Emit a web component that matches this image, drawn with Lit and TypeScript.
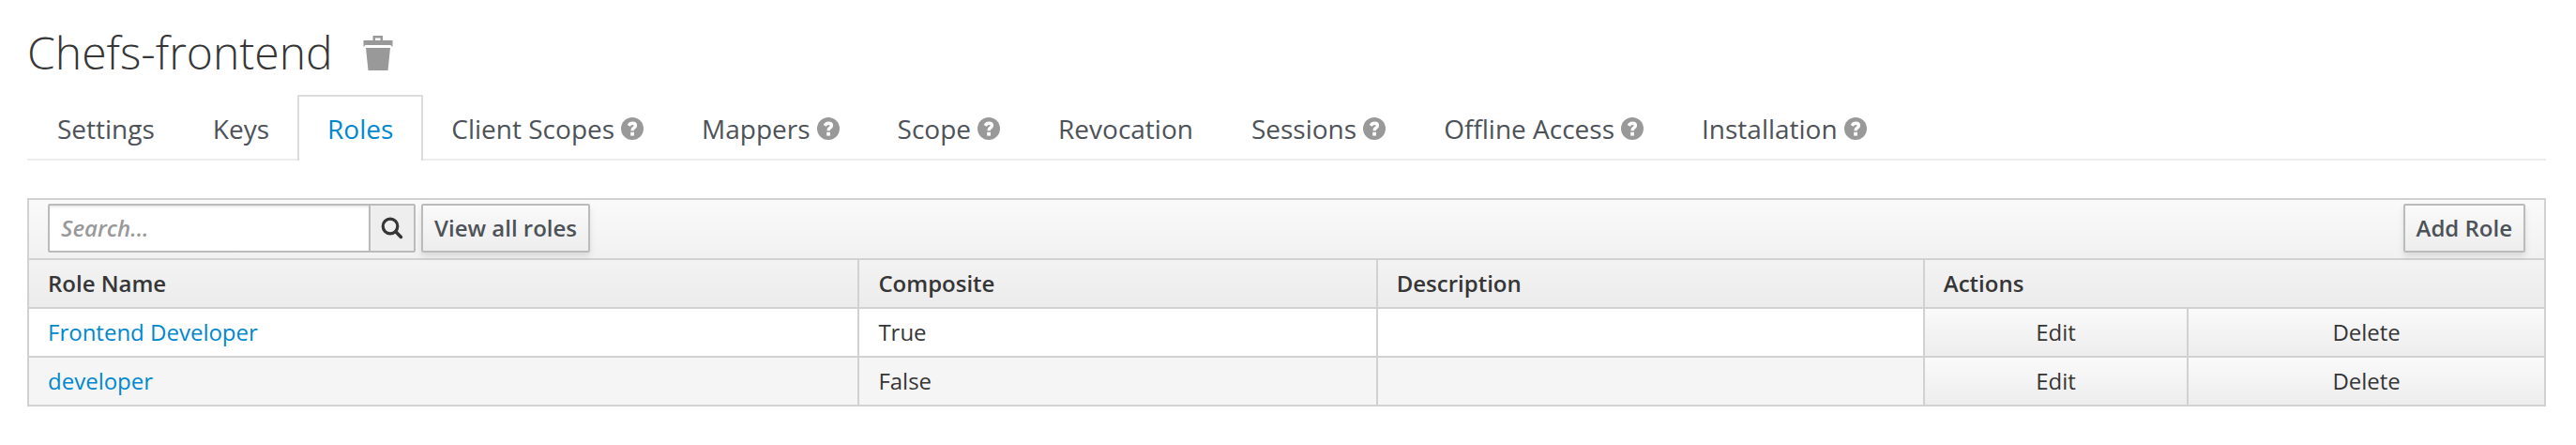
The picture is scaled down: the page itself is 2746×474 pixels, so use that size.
import { LitElement, html, css, svg, nothing } from "lit";
import { customElement, property, state } from "lit/decorators.js";

interface Tab {
  label: string;
  help?: boolean;
}

interface Role {
  name: string;
  composite: boolean;
  description: string;
}

const TABS: Tab[] = [
  { label: "Settings" },
  { label: "Keys" },
  { label: "Roles" },
  { label: "Client Scopes", help: true },
  { label: "Mappers", help: true },
  { label: "Scope", help: true },
  { label: "Revocation" },
  { label: "Sessions", help: true },
  { label: "Offline Access", help: true },
  { label: "Installation", help: true },
];

const ROLES: Role[] = [
  { name: "Frontend Developer", composite: true, description: "" },
  { name: "developer", composite: false, description: "" },
];

const helpIcon = html`<svg class="help" viewBox="0 0 24 24" aria-hidden="true">
  ${svg`<circle cx="12" cy="12" r="12" fill="#999"/>
  <path d="M8.2 8.9 Q9.6 6.3 12.2 6.3 Q15.4 6.3 15.4 8.8 Q15.4 10.3 13.7 11.3 Q12.1 12.2 12.1 14.2" fill="none" stroke="#fff" stroke-width="3.4"/>
  <rect x="10.2" y="15.8" width="3.8" height="3.8" fill="#fff"/>`}
</svg>`;

@customElement("client-tabs")
export class ClientTabs extends LitElement {
  @property() active = "";

  static styles = css`
    :host {
      display: block;
    }
    .tabs {
      display: flex;
      margin: 0;
      padding: 0;
      list-style: none;
      box-shadow: inset 0 -2px #ededed;
    }
    /* Neighbouring tabs share one border width. */
    .item + .item {
      margin-left: -2px;
    }
    .tab {
      display: flex;
      align-items: center;
      gap: 7px;
      height: 68px;
      padding: 0 30px;
      border: 2px solid transparent;
      border-bottom: 0;
      color: #4d5258;
      font-size: 28px;
      line-height: 40px;
      text-decoration: none;
      white-space: nowrap;
    }
    .tab.active {
      border-color: #dcdcdc;
      background: #fff;
      color: #0088ce;
    }
    .help {
      width: 24px;
      height: 24px;
    }
  `;

  render() {
    return html`<ul class="tabs">
      ${TABS.map(
        (tab) => html`<li class="item">
          <a
            class="tab ${tab.label === this.active ? "active" : ""}"
            href="#"
            aria-current=${tab.label === this.active ? "page" : nothing}
            >${tab.label}${tab.help ? helpIcon : nothing}</a
          >
        </li>`
      )}
    </ul>`;
  }
}

@customElement("role-table")
export class RoleTable extends LitElement {
  @state() private roles = ROLES;

  static styles = css`
    :host {
      display: block;
    }
    .panel {
      border: 2px solid #d1d1d1;
    }
    .toolbar {
      display: flex;
      align-items: center;
      justify-content: space-between;
      padding: 4px 20px 6px;
      background: linear-gradient(#fafafa, #f1f1f1);
    }
    .group {
      display: flex;
      gap: 6px;
    }
    .search {
      display: flex;
      box-sizing: border-box;
      height: 52px;
      border: 2px solid #bbb;
      border-radius: 2px;
    }
    .query {
      box-sizing: border-box;
      width: 340px;
      margin: 0;
      padding: 0 12px;
      border: 0;
      border-radius: 0;
      background: #fff;
      box-shadow: inset 0 2px 2px rgba(3, 3, 3, 0.08);
      color: #363636;
      font: 24px/32px "Open Sans", sans-serif;
    }
    .query::placeholder {
      color: #999;
      font-style: italic;
      font-weight: 600;
      opacity: 1;
    }
    .go {
      display: flex;
      align-items: center;
      justify-content: center;
      width: 48px;
      padding: 0;
      border: 0;
      border-left: 2px solid #bbb;
      background: #eee;
    }
    .glass {
      width: 24px;
      height: 24px;
    }
    .button {
      box-sizing: border-box;
      height: 52px;
      padding: 0 12px;
      border: 2px solid #bbb;
      border-radius: 2px;
      background: linear-gradient(#fafafa, #ededed);
      box-shadow: 0 4px 6px rgba(3, 3, 3, 0.1);
      color: #4d5258;
      font: 600 24px/32px "Open Sans", sans-serif;
      white-space: nowrap;
    }
    .grid {
      width: 100%;
      border-collapse: separate;
      border-spacing: 0;
      table-layout: fixed;
      color: #363636;
      font-size: 24px;
      line-height: 40px;
    }
    .name {
      width: 32.95%;
    }
    .composite {
      width: 20.6%;
    }
    .description {
      width: 21.75%;
    }
    .edit {
      width: 10.5%;
    }
    th,
    td {
      box-sizing: border-box;
      height: 52px;
      padding: 5px 20px;
      border-top: 2px solid #d1d1d1;
      text-align: left;
    }
    th + th,
    td + td {
      border-left: 2px solid #d1d1d1;
    }
    th {
      font-weight: 600;
    }
    .head {
      background: linear-gradient(#f3f3f3, #ececec);
    }
    .row:nth-child(even) {
      background: #f5f5f5;
    }
    .link {
      color: #0088ce;
      text-decoration: none;
    }
    .action {
      padding: 0;
    }
    .act {
      display: block;
      width: 100%;
      height: 50px;
      padding: 0;
      border: 0;
      background: linear-gradient(#fafafa, #ededed);
      color: #363636;
      font: 24px/40px "Open Sans", sans-serif;
    }
  `;

  render() {
    return html`<div class="panel">
      <div class="toolbar">
        <div class="group">
          <form class="search" role="search">
            <input class="query" type="text" placeholder="Search..." aria-label="Search roles" />
            <button class="go" type="button" aria-label="Search">
              <svg class="glass" viewBox="0 0 24 24" aria-hidden="true">
                <circle cx="10" cy="10" r="7.8" fill="none" stroke="#363636" stroke-width="3.2" />
                <path d="M15.8 15.8 L21.4 21.4" stroke="#363636" stroke-width="3.6" stroke-linecap="round" />
              </svg>
            </button>
          </form>
          <button class="button" type="button">View all roles</button>
        </div>
        <button class="button" type="button">Add Role</button>
      </div>
      <table class="grid">
        <colgroup>
          <col class="name" />
          <col class="composite" />
          <col class="description" />
          <col class="edit" />
          <col />
        </colgroup>
        <thead>
          <tr class="head">
            <th scope="col">Role Name</th>
            <th scope="col">Composite</th>
            <th scope="col">Description</th>
            <th scope="col" colspan="2">Actions</th>
          </tr>
        </thead>
        <tbody>
          ${this.roles.map(
            (role) => html`<tr class="row">
              <td><a class="link" href="#">${role.name}</a></td>
              <td>${role.composite ? "True" : "False"}</td>
              <td>${role.description}</td>
              <td class="action"><button class="act" type="button">Edit</button></td>
              <td class="action"><button class="act" type="button">Delete</button></td>
            </tr>`
          )}
        </tbody>
      </table>
    </div>`;
  }
}

@customElement("app-root")
export class AppRoot extends LitElement {
  static styles = css`
    :host {
      display: block;
      padding: 24px 32px 40px 29px;
      background: #fff;
      font-family: "Open Sans", sans-serif;
    }
    .heading {
      display: flex;
      align-items: center;
      gap: 32px;
      margin-bottom: 13px;
    }
    .title {
      margin: 0;
      color: #363636;
      font-size: 48px;
      font-weight: 300;
      line-height: 64px;
    }
    .remove {
      padding: 0;
      border: 0;
      background: none;
    }
    .trash {
      display: block;
      width: 32px;
      height: 38px;
    }
    .roles {
      margin-top: 40px;
    }
  `;

  render() {
    return html`<header class="heading">
        <h1 class="title">Chefs-frontend</h1>
        <button class="remove" type="button" aria-label="Delete client">
          <svg class="trash" viewBox="0 0 32 38" aria-hidden="true">
            <path
              fill="#999"
              fill-rule="evenodd"
              d="M0.5 13 V6 H10.5 V1 H21 V6 H31.5 V13 L29.5 11 H2.5 Z M13 3.5 V6 H18.5 V3.5 Z M3 14 H29 L26.5 38 H5.5 Z"
            />
          </svg>
        </button>
      </header>
      <nav aria-label="Client">
        <client-tabs active="Roles"></client-tabs>
      </nav>
      <role-table class="roles"></role-table>`;
  }
}
